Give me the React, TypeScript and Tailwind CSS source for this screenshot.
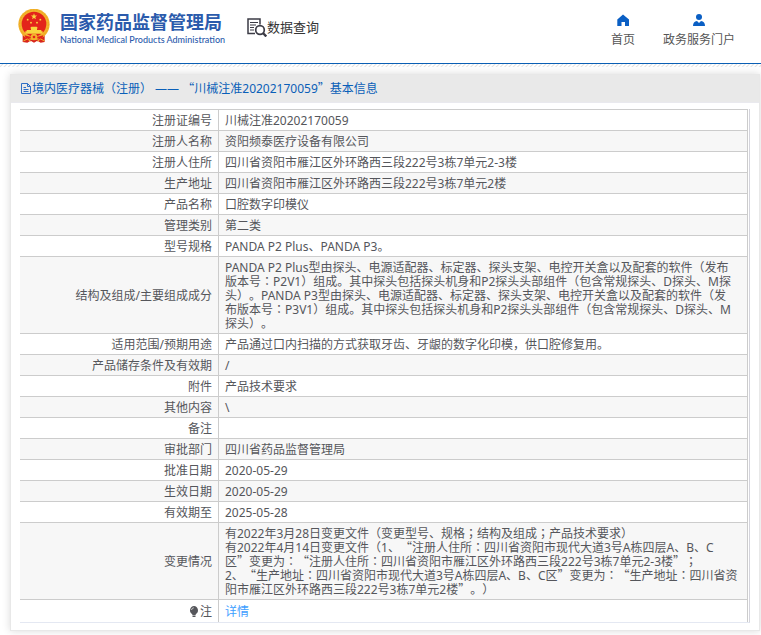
import { Fragment, type ReactNode } from "react";

const FONT = "font-['Noto_Sans','Noto_Sans_CJK_SC',sans-serif]";

/** Sets quotation marks full width and centres colons and semicolons in their cell. */
function Zh({ children }: { children: string }) {
  return (
    <>
      {children.split(/([“”：；])/).map((part, i) => {
        if (part === "“" || part === "”") {
          return (
            <span key={i} lang="zh-CN" className="font-['Noto_Sans_CJK_SC',sans-serif] leading-[10px]">
              {part}
            </span>
          );
        }
        if (part === "：" || part === "；") {
          return (
            <span key={i} lang="zh-TW" className="font-['Noto_Sans','Noto_Sans_CJK_TC',sans-serif]">
              {part}
            </span>
          );
        }
        return <Fragment key={i}>{part}</Fragment>;
      })}
    </>
  );
}

function Emblem() {
  return (
    <svg viewBox="0 0 96 102" className="h-[34px] w-8 shrink-0" role="img" aria-label="国徽">
      <path d="M14 76 L14 99 L28 101 L38 95 L48 101 L58 95 L68 101 L80 99 L80 76 Z" fill="#d8251c" />
      <circle cx="48" cy="46" r="47" fill="#f3b32b" />
      <circle cx="48" cy="46" r="43" fill="none" stroke="#e29d20" strokeWidth="2" strokeDasharray="5 4" />
      <circle cx="48" cy="45" r="37" fill="#e3231b" />
      <path d="M48 13 l2.4 6.4 6.8.3-5.3 4.3 1.8 6.6-5.7-3.7-5.7 3.7 1.8-6.6-5.3-4.3 6.8-.3z" fill="#f9d63f" />
      <g fill="#f9d63f">
        <circle cx="29" cy="32" r="2.8" />
        <circle cx="67" cy="32" r="2.8" />
        <circle cx="39" cy="41" r="2.8" />
        <circle cx="57" cy="41" r="2.8" />
        <path d="M36 58 L40 53 H56 L60 58 H57 V63 H70 V67 H74 V74 H22 V67 H26 V63 H39 V58 Z" />
      </g>
      <path d="M20 79 Q48 88 76 79 L72 92 L58 88 Q48 84 38 88 L24 92 Z" fill="#e3231b" />
      <circle cx="48" cy="84" r="10" fill="#f3b32b" />
      <circle cx="48" cy="84" r="4" fill="#e3231b" />
      <path d="M16 96 L28 90 L38 97 M80 96 L68 90 L58 97" stroke="#f3b32b" strokeWidth="3" fill="none" />
    </svg>
  );
}

function SearchDocIcon() {
  return (
    <svg viewBox="0 0 20 20" className="h-5 w-5 shrink-0" fill="none" stroke="#3b3b45" aria-hidden="true">
      <path d="M13 7.500 V2 H1 V16.500 H8" strokeWidth="1.500" />
      <path d="M3 5.500 H11 M3 8 H9 M3 10.500 H7 M3 13 H7" strokeWidth="1.200" />
      <circle cx="13" cy="13" r="4.300" strokeWidth="1.700" />
      <path d="M16 16 L19.300 19.500" strokeWidth="2.400" />
    </svg>
  );
}

function HomeIcon() {
  return (
    <svg viewBox="0 0 12 12" className="h-3 w-3" fill="#0a5fc4" aria-hidden="true">
      <path d="M6 0.500 L12 5.500 V12 H8 V8 H4.500 V12 H0.300 V5.500 Z" />
    </svg>
  );
}

function UserIcon() {
  return (
    <svg viewBox="0 0 12 12" className="h-3 w-3" fill="#0a5fc4" aria-hidden="true">
      <circle cx="6" cy="3" r="3" />
      <path d="M0 12 Q0 7.500 4 7 L6 9 L8 7 Q12 7.500 12 12 Z" />
    </svg>
  );
}

function DocIcon() {
  return (
    <svg viewBox="0 0 10 12" className="h-3 w-[10px] shrink-0" fill="none" stroke="#2f6fc6" aria-hidden="true">
      <path d="M0.500 0.500 H6.500 L9.500 3.500 V10.500 H0.500 Z M6.500 0.500 V3.500 H9.500 M2.500 4.500 H5 M2.500 6.500 H7.500 M2.500 8.500 H7.500" />
    </svg>
  );
}

function BulbIcon() {
  return (
    <svg viewBox="0 0 10 12" className="h-3 w-[10px]" fill="#55565b" aria-hidden="true">
      <path d="M5 0 A4.300 4.300 0 0 1 7 7.900 L6.500 9 H3.500 L3 7.900 A4.300 4.300 0 0 1 5 0 Z M3.500 9.500 H6.500 V11 H3.500 Z" />
      <path d="M2.500 4 Q2.800 2 4.800 1.800" stroke="#d0d0d0" fill="none" />
    </svg>
  );
}

const rows: { label: string; value: string[] }[] = [
  { label: "注册证编号", value: ["川械注准20202170059"] },
  { label: "注册人名称", value: ["资阳频泰医疗设备有限公司"] },
  { label: "注册人住所", value: ["四川省资阳市雁江区外环路西三段222号3栋7单元2-3楼"] },
  { label: "生产地址", value: ["四川省资阳市雁江区外环路西三段222号3栋7单元2楼"] },
  { label: "产品名称", value: ["口腔数字印模仪"] },
  { label: "管理类别", value: ["第二类"] },
  { label: "型号规格", value: ["PANDA P2 Plus、PANDA P3。"] },
  {
    label: "结构及组成/主要组成成分",
    value: [
      "PANDA P2 Plus型由探头、电源适配器、标定器、探头支架、电控开关盒以及配套的软件（发布版本号：P2V1）组成。其中探头包括探头机身和P2探头头部组件（包含常规探头、D探头、M探头）。PANDA P3型由探头、电源适配器、标定器、探头支架、电控开关盒以及配套的软件（发",
      "布版本号：P3V1）组成。其中探头包括探头机身和P2探头头部组件（包含常规探头、D探头、M",
      "探头）。",
    ],
  },
  { label: "适用范围/预期用途", value: ["产品通过口内扫描的方式获取牙齿、牙龈的数字化印模，供口腔修复用。"] },
  { label: "产品储存条件及有效期", value: ["/"] },
  { label: "附件", value: ["产品技术要求"] },
  { label: "其他内容", value: ["\\"] },
  { label: "备注", value: [""] },
  { label: "审批部门", value: ["四川省药品监督管理局"] },
  { label: "批准日期", value: ["2020-05-29"] },
  { label: "生效日期", value: ["2020-05-29"] },
  { label: "有效期至", value: ["2025-05-28"] },
  {
    label: "变更情况",
    value: [
      "有2022年3月28日变更文件（变更型号、规格；结构及组成；产品技术要求）",
      "有2022年4月14日变更文件（1、“注册人住所：四川省资阳市现代大道3号A栋四层A、B、C",
      "区”变更为：“注册人住所：四川省资阳市雁江区外环路西三段222号3栋7单元2-3楼”；",
      "2、“生产地址：四川省资阳市现代大道3号A栋四层A、B、C区”变更为：“生产地址：四川省资阳市雁江区外环路西三段222号3栋7单元2楼”。）",
    ],
  },
];

function Row({ label, children, last = false }: { label: ReactNode; children: ReactNode; last?: boolean }) {
  const edge = last ? "pb-[3px] pt-[5px]" : "border-b border-b-[#ccc] pb-[2px] pt-1";
  return (
    <tr className="even:bg-[#f7f7f7]">
      <th scope="row" className={`h-[21px] border-r border-r-[#ccc] pr-[6px] text-right align-middle font-normal ${edge}`}>
        {label}
      </th>
      <td className={`border-r border-r-[#ccc] pl-[6px] pr-2 align-middle ${edge}`}>{children}</td>
    </tr>
  );
}

function NavLink({ icon, text }: { icon: ReactNode; text: string }) {
  return (
    <a href="#" className="flex flex-col items-center gap-1 text-[12px] leading-5 text-[#555]">
      {icon}
      {text}
    </a>
  );
}

export default function App() {
  return (
    <div
      lang="zh-CN"
      className={`bg-white text-[12px] leading-[14px] text-[#55565b] [text-spacing-trim:space-all] ${FONT}`}
    >
      <header className="flex h-16 items-start border-b border-[#0a5fb4] pl-[18px] pr-[26px]">
        <a href="#" className="flex items-start gap-[10px] pt-[9px]">
          <Emblem />
          <span className="flex flex-col text-[#2b5bac]">
            <span className="text-[18px] font-bold leading-[26px]">国家药品监督管理局</span>
            <span className="text-[9px] font-medium leading-[10px] [font-family:Lato,sans-serif]">
              National Medical Products Administration
            </span>
          </span>
        </a>
        <a href="#" className="ml-[22px] flex items-center pt-[17px] text-[13px] leading-5 text-[#333]">
          <SearchDocIcon />
          数据查询
        </a>
        <nav className="ml-auto flex gap-7 pt-[14px]">
          <NavLink icon={<HomeIcon />} text="首页" />
          <NavLink icon={<UserIcon />} text="政务服务门户" />
        </nav>
      </header>
      <div className="h-[3px] bg-[repeating-linear-gradient(135deg,#ffffff_0px,#ffffff_1px,#e2e2e2_2px,#ffffff_3px)]" />

      <main className="pb-1 pl-[10px] pr-px pt-[7px]">
        <section className="border border-[#e8e8e8] bg-white shadow-[0_0_8px_rgba(0,0,0,0.15)]">
          <h1 className="flex h-7 items-center gap-[1px] border-b border-[#e9e9ee] bg-[#e9e9e9] pl-[10px] text-[12px] font-normal text-[#0a5fb8]">
            <DocIcon />
            <span>
              <Zh>境内医疗器械（注册） —— “川械注准20202170059”基本信息</Zh>
            </span>
          </h1>
          <div className="px-[9px] pb-[7px] pt-[6px]">
            <div className="border-b border-r border-r-[#d4d4dc] border-b-[#e4e8f2] pr-px">
              <table className="w-full table-fixed border-separate border-spacing-0 border-t border-[#ccc]">
                <colgroup>
                  <col className="w-[199px]" />
                  <col />
                </colgroup>
                <tbody>
                  {rows.map((row) => (
                    <Row key={row.label} label={row.label}>
                      {row.value.map((line, i) => (
                        <p key={i}>
                          <Zh>{line}</Zh>
                        </p>
                      ))}
                    </Row>
                  ))}
                  <Row
                    last
                    label={
                      <span className="flex items-center justify-end gap-px">
                        <BulbIcon />注
                      </span>
                    }
                  >
                    <a href="#" className="text-[#409eff]">
                      详情
                    </a>
                  </Row>
                </tbody>
              </table>
            </div>
          </div>
        </section>
      </main>
    </div>
  );
}
